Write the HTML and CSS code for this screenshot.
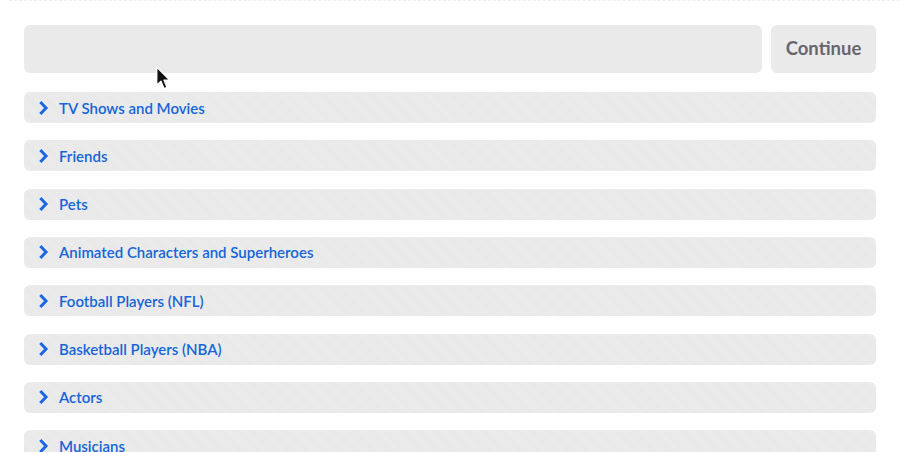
FILE: index.html
```html
<!DOCTYPE html>
<html lang="en">
<head>
  <meta charset="UTF-8">
  <title>Choose a category</title>
  <link rel="stylesheet" href="styles.css">
</head>
<body>
  <div class="page">
    <div class="search-row">
      <div class="search-box"></div>
      <button class="continue-btn">Continue</button>
    </div>
    <ul class="categories">
      <li class="category"><svg class="chevron" viewBox="0 0 10 15"><path d="M2 1.8 L7.4 7.5 L2 13.2"/></svg><span>TV Shows and Movies</span></li>
      <li class="category"><svg class="chevron" viewBox="0 0 10 15"><path d="M2 1.8 L7.4 7.5 L2 13.2"/></svg><span>Friends</span></li>
      <li class="category"><svg class="chevron" viewBox="0 0 10 15"><path d="M2 1.8 L7.4 7.5 L2 13.2"/></svg><span>Pets</span></li>
      <li class="category"><svg class="chevron" viewBox="0 0 10 15"><path d="M2 1.8 L7.4 7.5 L2 13.2"/></svg><span>Animated Characters and Superheroes</span></li>
      <li class="category"><svg class="chevron" viewBox="0 0 10 15"><path d="M2 1.8 L7.4 7.5 L2 13.2"/></svg><span>Football Players (NFL)</span></li>
      <li class="category"><svg class="chevron" viewBox="0 0 10 15"><path d="M2 1.8 L7.4 7.5 L2 13.2"/></svg><span>Basketball Players (NBA)</span></li>
      <li class="category"><svg class="chevron" viewBox="0 0 10 15"><path d="M2 1.8 L7.4 7.5 L2 13.2"/></svg><span>Actors</span></li>
      <li class="category"><svg class="chevron" viewBox="0 0 10 15"><path d="M2 1.8 L7.4 7.5 L2 13.2"/></svg><span>Musicians</span></li>
    </ul>
  </div>
  <!-- mouse pointer caught in the capture -->
  <svg class="cursor" viewBox="0 0 14 22">
    <path d="M1.5 1 L1.5 17 L5.2 13.4 L8 20 L10.6 18.9 L7.9 12.5 L13 12.5 Z" fill="#111" stroke="#fff" stroke-width="1.2" stroke-linejoin="round"/>
  </svg>
</body>
</html>
```

FILE: styles.css
```css
body {
  margin: 0;
  background: #fff;
  font-family: Lato, 'Open Sans', Arial, sans-serif;
  overflow: hidden;
  position: relative;
  height: 452px;
}
.page {
  border-top: 1px dashed #f1f1f1;
  margin-left: 9px;
  padding: 24px 24px 0 15px;
}
.search-row {
  display: flex;
  gap: 9px;
  margin-bottom: 19px;
}
.search-box {
  flex: 1;
  height: 48px;
  background: #ebeaeb;
  border-radius: 6px;
}
.continue-btn {
  width: 105px;
  height: 48px;
  border: none;
  border-radius: 6px;
  background: #ebeaeb;
  color: #67666e;
  font-family: inherit;
  font-size: 18.5px;
  font-weight: 700;
  padding: 0 0 3px 0;
}
.categories {
  list-style: none;
  margin: 0;
  padding: 0;
  display: flex;
  flex-direction: column;
  gap: 17.33px;
}
.category {
  height: 31px;
  border-radius: 6px;
  background: repeating-linear-gradient(45deg, #ececec 0, #ececec 1px, #e8e8e8 1px, #e8e8e8 2px);
  display: flex;
  align-items: center;
  padding-left: 14px;
  gap: 10px;
  color: #1565d8;
  font-size: 15px;
  font-weight: 600;
}
.chevron {
  width: 11px;
  height: 16px;
  fill: none;
  stroke: #1a66e3;
  stroke-width: 2.8;
}
.cursor {
  position: absolute;
  left: 155px;
  top: 66px;
  width: 16px;
  height: 25px;
}
```
